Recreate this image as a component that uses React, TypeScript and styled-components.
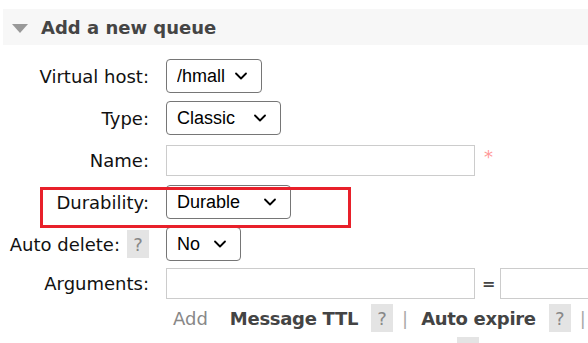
import React from 'react'
import styled, { createGlobalStyle } from 'styled-components'
import { ChevronDown } from 'lucide-react'

const GlobalStyle = createGlobalStyle`
  html, body {
    margin: 0;
    padding: 0;
    background: #fff;
    overflow: hidden;
  }
  body {
    font-family: 'DejaVu Sans', Verdana, sans-serif;
    font-size: 18px;
    color: #111;
  }
`

const Page = styled.div`
  position: relative;
  width: 588px;
  height: 343px;
  overflow: hidden;
  padding-top: 9px;
  box-sizing: border-box;
`

const SectionHeader = styled.div`
  display: flex;
  align-items: center;
  gap: 13px;
  margin-left: 3px;
  height: 36px;
  padding-left: 9px;
  background: #f7f7f7;
`

const Triangle = styled.span`
  width: 0;
  height: 0;
  border-left: 8px solid transparent;
  border-right: 8px solid transparent;
  border-top: 9px solid #999;
  margin-top: 2px;
`

const Title = styled.h2`
  margin: 0;
  font-size: 18px;
  font-weight: bold;
  color: #454545;
  white-space: nowrap;
`

const Form = styled.div`
  display: grid;
  grid-template-columns: 152px auto;
  grid-template-rows: repeat(5, 42px) auto;
  column-gap: 14px;
  margin-top: 10px;
`

const Label = styled.div<{ $top?: boolean }>`
  display: flex;
  align-items: center;
  justify-content: flex-end;
  gap: 7px;
  padding-right: 3px;
  white-space: nowrap;
  ${(p) => (p.$top ? 'align-self: start; height: 31px; margin-top: 3px;' : '')}
`

const Cell = styled.div`
  display: flex;
  align-items: center;
  gap: 9px;
  white-space: nowrap;
`

const SelectWrap = styled.span`
  position: relative;
  display: inline-flex;
`

const Select = styled.select<{ $w: number }>`
  appearance: none;
  width: ${(p) => p.$w}px;
  height: 34px;
  box-sizing: border-box;
  padding: 0 0 0 10px;
  font-family: 'Liberation Sans', Arial, sans-serif;
  font-size: 18px;
  color: #000;
  background: #fff;
  border: 1px solid #767676;
  border-radius: 4px;
`

const Chevron = styled(ChevronDown)`
  position: absolute;
  right: 11px;
  top: 50%;
  transform: translateY(-50%);
  pointer-events: none;
  color: #000;
`

const TextInput = styled.input`
  width: 309px;
  height: 31px;
  box-sizing: border-box;
  border: 1px solid #ccc;
  padding: 0 4px;
  font-size: 16px;
  margin: 0;
`

const Required = styled.span`
  color: #f99;
  font-size: 18px;
  margin-top: -7px;
`

const Equals = styled.span`
  font-weight: bold;
  color: #444;
  font-size: 16px;
  margin: 0 -4px 0 -2px;
`

const Help = styled.span`
  display: inline-flex;
  align-items: center;
  justify-content: center;
  width: 22px;
  height: 28px;
  background: #e4e4e4;
  color: #888;
  font-size: 18px;
  flex-shrink: 0;
`

const ArgsCell = styled.div`
  display: flex;
  flex-direction: column;
  gap: 5px;
  margin-top: 3px;
`

const ArgsLine = styled.div<{ $indent?: number }>`
  display: flex;
  align-items: center;
  height: 28px;
  white-space: nowrap;
  padding-left: ${(p) => p.$indent ?? 0}px;
`

const AddLink = styled.span`
  color: #888;
  margin: 0 22px 0 7px;
`

const ArgLink = styled.span`
  font-weight: bold;
  color: #444;
  letter-spacing: -0.3px;
  margin-right: 13px;
`

const Sep = styled.span`
  color: #aaa;
  margin: 0 13px 0 9px;
`

const Highlight = styled.div`
  position: absolute;
  left: 40px;
  top: 187px;
  width: 311px;
  height: 41px;
  box-sizing: border-box;
  border: 3px solid #e8202a;
  pointer-events: none;
`

const Dropdown = ({ value, w }: { value: string; w: number }) => (
  <SelectWrap>
    <Select $w={w} defaultValue={value}>
      <option>{value}</option>
    </Select>
    <Chevron size={20} strokeWidth={2.2} />
  </SelectWrap>
)

const App = () => (
  <Page>
    <GlobalStyle />
    <SectionHeader>
      <Triangle />
      <Title>Add a new queue</Title>
    </SectionHeader>

    <Form>
      <Label>Virtual host:</Label>
      <Cell>
        <Dropdown value="/hmall" w={96} />
      </Cell>

      <Label>Type:</Label>
      <Cell>
        <Dropdown value="Classic" w={115} />
      </Cell>

      <Label>Name:</Label>
      <Cell>
        <TextInput type="text" />
        <Required>*</Required>
      </Cell>

      <Label>Durability:</Label>
      <Cell>
        <Dropdown value="Durable" w={125} />
      </Cell>

      <Label>
        Auto delete: <Help>?</Help>
      </Label>
      <Cell>
        <Dropdown value="No" w={75} />
      </Cell>

      <Label $top>Arguments:</Label>
      <ArgsCell>
        <Cell>
          <TextInput type="text" />
          <Equals>=</Equals>
          <TextInput type="text" />
        </Cell>
        <ArgsLine>
          <AddLink>Add</AddLink>
          <ArgLink>Message TTL</ArgLink>
          <Help>?</Help>
          <Sep>|</Sep>
          <ArgLink>Auto expire</ArgLink>
          <Help>?</Help>
          <Sep>|</Sep>
        </ArgsLine>
        <ArgsLine $indent={291}>
          <Help />
        </ArgsLine>
      </ArgsCell>
    </Form>

    <Highlight />
  </Page>
)

export default App
